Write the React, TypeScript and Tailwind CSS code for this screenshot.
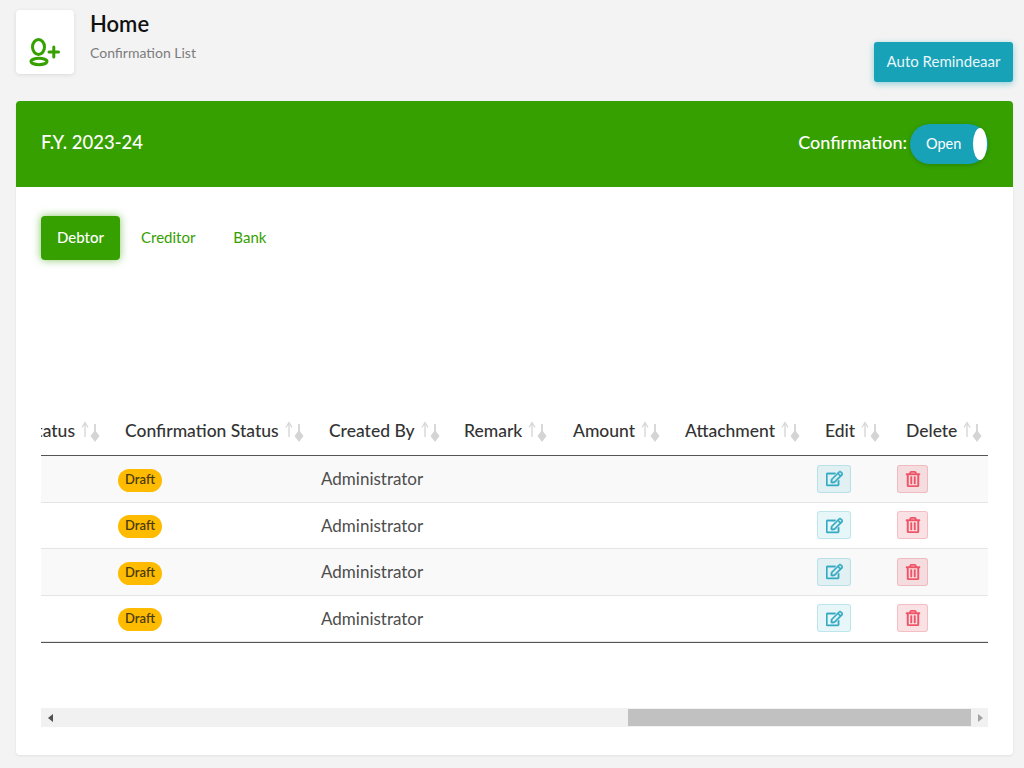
import { FaRegEdit, FaRegTrashAlt } from 'react-icons/fa'

const columns = [
  { label: 'Status', className: 'justify-end pr-[17px]' },
  { label: 'Confirmation Status', className: 'pl-[7px]' },
  { label: 'Created By', className: 'pl-2' },
  { label: 'Remark', className: 'pl-2' },
  { label: 'Amount', className: 'pl-2' },
  { label: 'Attachment', className: 'pl-2' },
  { label: 'Edit', className: 'pl-2' },
  { label: 'Delete', className: 'pl-[9px]' },
]

const gridCols = 'grid grid-cols-[77px_203px_135px_109px_112px_140px_80px_91px]'

function SortIcon() {
  return (
    <svg width="20" height="22" viewBox="0 0 20 22" className="ml-[6px] shrink-0">
      <path d="M4 16V2M1 6.500L4 1.500 7 6.500" fill="none" stroke="#d8d8d8" strokeWidth="1.400" />
      <path d="M14 3v16" stroke="#d4d4d4" strokeWidth="1.800" />
      <path d="M14 21l-4.500-6 4.500-6 4.500 6z" fill="#d4d4d4" />
    </svg>
  )
}

function Row({ shaded }: { shaded: boolean }) {
  return (
    <div className={`${gridCols} h-[46.5px] items-center border-b border-[#e5e5e5] ${shaded ? 'bg-[#f9f9f9]' : 'bg-white'}`}>
      <div />
      <div>
        <span className="inline-flex h-[23px] w-[44px] items-center justify-center rounded-full bg-[#ffbb00] pb-[1px] text-[13px] font-semibold text-[#4a3c10]">
          Draft
        </span>
      </div>
      <div className="text-[17px] text-[#4d4d4d]">Administrator</div>
      <div />
      <div />
      <div />
      <div>
        <button className="flex h-[28px] w-[34px] items-center justify-center rounded-[3px] border border-[#17a2b8]/20 bg-[#17a2b8]/10 text-[#35abc3]">
          <FaRegEdit size={17} stroke="currentColor" strokeWidth={14} />
        </button>
      </div>
      <div>
        <button className="flex h-[28px] w-[31px] items-center justify-center rounded-[3px] border border-[#dc3545]/20 bg-[#dc3545]/15 text-[#ee5468]">
          <FaRegTrashAlt size={16} stroke="currentColor" strokeWidth={14} />
        </button>
      </div>
    </div>
  )
}

export default function App() {
  return (
    <div className="h-[768px] w-[1024px] overflow-hidden bg-[#f3f3f3] pl-[16px] pr-[11px] pt-[10px] font-['Lato',sans-serif] text-[#333]">
      <div className="flex h-[91px]">
        <div className="flex h-[64px] w-[58px] items-end justify-center rounded-[4px] bg-white pb-[6px] shadow-[0_1px_4px_rgba(0,0,0,0.1)]">
          <svg width="32" height="32" viewBox="0 0 32 32" fill="none" stroke="#35a000" strokeWidth="3" strokeLinecap="round">
            <ellipse cx="9.500" cy="11" rx="6" ry="7.500" />
            <ellipse cx="10" cy="25.500" rx="8" ry="3.200" />
            <path d="M20 16h9.500M24.800 11v10" />
          </svg>
        </div>
        <div className="ml-[16px]">
          <h1 className="text-[22px] font-semibold leading-[28px] text-[#111]">Home</h1>
          <p className="mt-[6px] text-[14px] leading-[18px] text-[#7c7c7c]">Confirmation List</p>
        </div>
        <button className="ml-auto mt-[32px] h-[40px] w-[139px] rounded-[3px] bg-[#17a2b8] pb-[2px] text-[15px] text-[#e8f6f8] shadow-[0_2px_6px_rgba(23,162,184,0.45)]">
          Auto Remindeaar
        </button>
      </div>

      <div className="h-[654px] overflow-hidden rounded-[4px] bg-white shadow-[0_1px_3px_rgba(0,0,0,0.08)]">
        <div className="flex h-[86px] items-center justify-between bg-[#35a000] px-[25px] text-white">
          <span className="pb-[2px] text-[18.500px] font-medium">F.Y. 2023-24</span>
          <div className="flex items-center">
            <span className="pb-[4px] text-[18px] font-medium">Confirmation:</span>
            <div className="relative ml-[3px] flex h-[40px] w-[78px] items-center rounded-full bg-[#17a2b8] pl-[16px] pb-[1px] text-[14.500px] shadow-[0_1px_4px_rgba(0,0,0,0.2)]">
              Open
              <span className="absolute right-[1px] top-[4px] h-[32px] w-[14px] rounded-[50%] bg-white" />
            </div>
          </div>
        </div>

        <div className="px-[25px] pt-[29px]">
          <div className="flex items-center">
            <div className="flex h-[44px] w-[79px] items-center justify-center rounded-[4px] bg-[#35a000] pb-[2px] text-[15px] font-medium text-white shadow-[0_0_9px_rgba(53,160,0,0.6)]">
              Debtor
            </div>
            <div className="ml-[21px] pb-[2px] text-[15px] text-[#35a000]">Creditor</div>
            <div className="ml-[38px] pb-[2px] text-[15px] text-[#35a000]">Bank</div>
          </div>

          <div className="mt-[151px]">
            <div className={`${gridCols} h-[45px] items-center border-b border-[#555] pb-[3px] text-[17.500px] font-medium text-[#333]`}>
              {columns.map((col) => (
                <div key={col.label} className={`flex items-center overflow-hidden ${col.className}`}>
                  <span className="shrink-0">{col.label}</span>
                  <SortIcon />
                </div>
              ))}
            </div>
            <Row shaded />
            <Row shaded={false} />
            <Row shaded />
            <div className="border-b border-[#555]">
              <Row shaded={false} />
            </div>
          </div>

          <div className="mt-[65px] flex h-[19px] items-center bg-[#f1f1f1]">
            <span className="ml-[7px] h-0 w-0 border-y-[4px] border-r-[5px] border-y-transparent border-r-[#505050]" />
            <div className="ml-[575px] h-[17px] w-[343px] bg-[#c1c1c1]" />
            <span className="ml-[7px] h-0 w-0 border-y-[4px] border-l-[5px] border-y-transparent border-l-[#a3a3a3]" />
          </div>
        </div>
      </div>
    </div>
  )
}
